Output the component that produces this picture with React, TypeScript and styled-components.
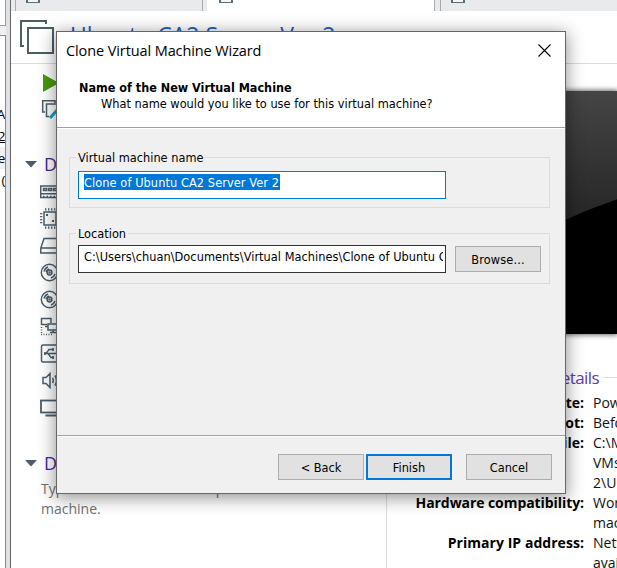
import React from "react";
import styled, { createGlobalStyle } from "styled-components";

const GlobalStyle = createGlobalStyle`
  * { box-sizing: border-box; }
  body { margin: 0; background: #fff; overflow: hidden; }
`;

const UI = `"Open Sans", "Noto Sans", sans-serif`;
const DLG = `"DejaVu Sans Condensed", "DejaVu Sans", sans-serif`;

const Window = styled.div`
  position: relative;
  display: flex;
  width: 617px;
  height: 568px;
  overflow: hidden;
  background: #fff;
  font-family: ${UI};
  color: #111;
`;

const Text = styled.span<{ $ls?: number }>`
  display: block;
  white-space: pre;
  letter-spacing: ${(p) => p.$ls ?? 0}px;
`;

/* library strip */
const Library = styled.aside`
  width: 6px;
  flex: none;
  display: flex;
  flex-direction: column;
  gap: 9px;
  background: #f0f0f0;
`;
const SearchEdge = styled.div`
  height: 26px;
  background: #fff;
  border-right: 1px solid #999;
  border-bottom: 1px solid #999;
`;
const Tree = styled.div`
  flex: 1;
  padding-top: 67px;
  background: #fff;
  border-top: 1px solid #828790;
  border-right: 1px solid #828790;
`;
const TreeRow = styled.div<{ $on?: boolean }>`
  display: flex;
  justify-content: flex-end;
  height: 22px;
  overflow: hidden;
  font-size: 13.5px;
  line-height: 23px;
  letter-spacing: -0.4px;
  color: #000;
  background: ${(p) => (p.$on ? "#f0f0f0" : "#fff")};
`;
const Splitter = styled.div`
  width: 5px;
  flex: none;
  background: #e0e1e5;
  border-right: 1px solid #656565;
`;

/* main area */
const Main = styled.main`
  flex: 1;
  min-width: 0;
  display: flex;
  flex-direction: column;
`;
const TabBar = styled.div`
  display: flex;
  height: 11px;
  flex: none;
  background: #e9eaec;
  overflow: hidden;
`;
const Tab = styled.div<{ $w: number; $pad: number; $active?: boolean; $line?: boolean }>`
  width: ${(p) => p.$w}px;
  flex: none;
  height: 11px;
  padding-left: ${(p) => p.$pad}px;
  background: ${(p) => (p.$active ? "#fff" : "#e9eaec")};
  border-right: 1px solid ${(p) => (p.$line ? "#a9abae" : "transparent")};
`;
const TabIcon = styled.div`
  width: 14px;
  height: 3px;
  background: #f4f5f6;
  border: 2px solid #5d6d78;
  border-top: 0;
  border-bottom-width: 1px;
`;
const Header = styled.header`
  display: flex;
  height: 53px;
  flex: none;
  padding: 8px 0 0 8px;
  gap: 16px;
  border-bottom: 1px solid #dcdcdc;
`;
const VmTitle = styled.h1`
  margin: 3px 0 0;
  font-size: 23px;
  line-height: 27px;
  font-weight: 400;
  color: #1761c2;
`;
const Columns = styled.div`
  flex: 1;
  min-height: 0;
  display: flex;
`;
const LeftColumn = styled.div`
  width: 376px;
  flex: none;
  padding: 10px 0 0 14px;
  border-right: 1px solid #dcdcdc;
`;
const Actions = styled.div`
  display: flex;
  flex-direction: column;
  gap: 7px;
  height: 78px;
  padding-left: 16px;
`;
const SectionHead = styled.div`
  display: flex;
  align-items: center;
  gap: 7px;
  height: 24px;
  font-size: 18px;
  line-height: 24px;
  color: #432a9b;
`;
const Devices = styled.div`
  display: flex;
  flex-direction: column;
  height: 275px;
  padding: 2px 0 0 15px;
`;
const Device = styled.div`
  height: 27px;
  display: flex;
  align-items: center;
`;
const Description = styled.div`
  padding: 4px 0 0 16px;
  font-size: 14px;
  line-height: 20px;
  color: #707070;
`;
const RightColumn = styled.div`
  flex: 1;
  min-width: 0;
  display: flex;
  flex-direction: column;
  padding-top: 27px;
`;
const Preview = styled.div`
  height: 243px;
  flex: none;
  margin-left: 100px;
  overflow: hidden;
  box-shadow: 0 0 5px 1px rgba(0, 0, 0, 0.6);
  svg { display: block; }
`;
const DetailsHead = styled.div`
  display: flex;
  flex: none;
  align-items: center;
  gap: 4px;
  height: 24px;
  margin: 31px 0 4px;
  font-size: 17px;
  color: #5a3fa6;
  &::after { content: ""; flex: 1; height: 1px; background: #dcdcdc; }
`;
const DetailsName = styled.div`
  width: 212px;
  display: flex;
  justify-content: flex-end;
`;
const DetailRow = styled.div`
  display: grid;
  flex: none;
  grid-template-columns: 197px 120px;
  grid-template-rows: 20px;
  column-gap: 9px;
  font-size: 14px;
  line-height: 20px;
`;
const DetailLabel = styled.div`
  display: flex;
  justify-content: flex-end;
  font-weight: 700;
  color: #000;
`;

/* dialog */
const Dialog = styled.section`
  position: absolute;
  left: 56px;
  top: 31px;
  width: 510px;
  height: 463px;
  display: flex;
  flex-direction: column;
  background: #f0f0f0;
  border: 1px solid #666;
  box-shadow: 0 3px 16px 1px rgba(0, 0, 0, 0.42);
  font-family: ${DLG};
  font-size: 12.65px;
  color: #000;
`;
const DialogTop = styled.div`
  height: 96px;
  flex: none;
  background: #fff;
  border-bottom: 1px solid #a0a0a0;
`;
const TitleBar = styled.div`
  display: flex;
  justify-content: space-between;
  align-items: center;
  height: 36px;
  padding: 0 14px 0 9px;
  font-family: ${UI};
  font-size: 14.5px;
`;
const Heading = styled.div`
  padding-left: 22px;
  margin-top: 12px;
  line-height: 16px;
  font-weight: 700;
  font-size: 12.5px;
`;
const Question = styled.div`
  padding-left: 44px;
  line-height: 16px;
`;
const Body = styled.div`
  flex: 1;
  display: flex;
  flex-direction: column;
  gap: 25px;
  padding: 28px 15px 0 12px;
  border-top: 1px solid #fff;
`;
const Group = styled.div`
  height: 51px;
  border: 1px solid #dcdcdc;
  padding-left: 8px;
`;
const Legend = styled.div`
  width: max-content;
  height: 16px;
  margin: -8px 0 0 -2px;
  padding: 0 2px;
  line-height: 16px;
  background: #f0f0f0;
`;
const FieldRow = styled.div<{ $top: number }>`
  display: flex;
  align-items: center;
  gap: 9px;
  margin-top: ${(p) => p.$top}px;
`;
const Field = styled.div<{ $focus?: boolean }>`
  width: 368px;
  height: 28px;
  padding: 2px 2px 0 5px;
  background: #fff;
  border: 1px solid ${(p) => (p.$focus ? "#0078d7" : "#333")};
`;
const FieldText = styled.div<{ $on?: boolean }>`
  width: ${(p) => (p.$on ? "196px" : "auto")};
  height: 16px;
  line-height: 17px;
  overflow: hidden;
  color: ${(p) => (p.$on ? "#fff" : "#000")};
  background: ${(p) => (p.$on ? "#0078d7" : "transparent")};
`;
const Button = styled.button<{ $primary?: boolean }>`
  width: 86px;
  height: 26px;
  flex: none;
  padding: 0;
  display: flex;
  align-items: center;
  justify-content: center;
  border: ${(p) => (p.$primary ? "2px solid #0078d7" : "1px solid #adadad")};
  background: #e1e1e1;
  color: #000;
  font: inherit;
`;
const Footer = styled.div`
  height: 58px;
  flex: none;
  display: flex;
  justify-content: flex-end;
  padding: 18px 13px 0 0;
  border-top: 1px solid #a0a0a0;
  box-shadow: inset 0 1px #fff;
`;
const Pair = styled.div`
  display: flex;
  gap: 2px;
  margin-right: 14px;
`;

const C = "#4c5d69";

const Line = ({ w, h, children }: { w: number; h: number; children: React.ReactNode }) => (
  <svg width={w} height={h} viewBox={`0 0 ${w} ${h}`} fill="none" stroke={C} strokeWidth="1.5">
    {children}
  </svg>
);

const Caret = () => (
  <svg width="12" height="24" viewBox="0 0 12 24">
    <path d="M0 9H12L6 15.5Z" fill={C} />
  </svg>
);

const MachineIcon = () => (
  <svg width="35" height="36" viewBox="0 0 35 36" fill="none" stroke={C} strokeWidth="2">
    <path d="M27 5V2H2V27H5" />
    <rect x="9" y="9" width="25" height="25" />
  </svg>
);

const Disc = () => (
  <Line w={20} h={19}>
    <circle cx="9.5" cy="9.5" r="8.2" />
    <circle cx="9.5" cy="9.5" r="2.4" />
    <path d="M4 8.5Q5 5 8 4M11 15Q14 14 15 11M6 9Q7 6.5 9 6" />
    <circle cx="9.5" cy="9.5" r=".5" />
  </Line>
);

const devices: [string, React.ReactNode][] = [
  ["memory", <Line w={24} h={14}>
    <path d="M.7 1H23V12.6H.7ZM.7 8.8H23" />
    <path d="M3.5 3.5h3v2h-3zM8.5 3.5h3v2h-3zM13.5 3.5h3v2h-3z" />
    <path d="M3 11.5h18" strokeDasharray="1.5 2" />
  </Line>],
  ["cpu", <Line w={20} h={21}>
    <rect x="4" y="4" width="12" height="13" />
    <path d="M5 1.3h12M5 19.7h12" strokeWidth="2.2" strokeDasharray="1.3 1.7" />
    <path d="M1.2 5v12M18.8 5v12" strokeWidth="2.2" strokeDasharray="1.3 1.7" />
    <path d="M6 7h2M12 13h2" strokeWidth="2" />
  </Line>],
  ["disk", <Line w={24} h={18}>
    <path d="M4 1.5H20L23 11V16H.8V11ZM.8 11H23" />
  </Line>],
  ["cd", <Disc />],
  ["cd2", <Disc />],
  ["net", <Line w={20} h={19}>
    <path d="M7 7.5H1.5V1.5H11V6" />
    <rect x="8" y="7" width="11" height="6" />
    <path d="M5 9.5H8M13 13v2M10 15.5h6" />
    <path d="M1.5 10v7M1 17.5h12" strokeDasharray="1 1.5" />
  </Line>],
  ["usb", <Line w={22} h={19}>
    <rect x="1.5" y="1" width="20" height="17" rx="1.5" />
    <path d="M4 9.5H18M6 9.5L9 5.5H13M8 9.5L11 13.5H14" strokeWidth="1.3" />
    <path d="M4 9.5h2M12 5.5h2M12 13.5h2" strokeWidth="2.4" />
  </Line>],
  ["sound", <Line w={20} h={17}>
    <path d="M3 5.5H6L10 1.5V15.5L6 11.5H3ZM12.5 6Q14 8.5 12.5 11M15 3.5Q18 8.5 15 13.5" />
  </Line>],
  ["display", <Line w={24} h={18}>
    <rect x="1" y="1.5" width="22" height="12" strokeWidth="1.8" />
    <path d="M5.5 16.5h12" strokeWidth="2" />
  </Line>],
];

const rows: [string, number, string][] = [
  ["State:", 0, "Powered off"],
  ["Snapshot:", 0, "Before"],
  ["Configuration file:", 0, "C:\\MyVM"],
  ["", 0, "VMs\\Ub"],
  ["", 0, "2\\Ubuntu"],
  ["Hardware compatibility:", -0.07, "Workstation"],
  ["", 0, "machine"],
  ["Primary IP address:", 0.05, "Network"],
  ["", 0, "available"],
];

export default function App() {
  return (
    <>
      <GlobalStyle />
      <Window>
        <Library>
          <SearchEdge />
          <Tree>
            <TreeRow>A</TreeRow>
            <TreeRow><u>2</u></TreeRow>
            <TreeRow $on>re</TreeRow>
            <TreeRow>(</TreeRow>
          </Tree>
        </Library>
        <Splitter />
        <Main>
          <TabBar>
            <Tab $w={5} $pad={0} $line />
            <Tab $w={187} $pad={10} $line><TabIcon /></Tab>
            <Tab $w={4} $pad={0} />
            <Tab $w={228} $pad={12} $active $line><TabIcon /></Tab>
            <Tab $w={6} $pad={0} $line />
            <Tab $w={190} $pad={10}><TabIcon /></Tab>
          </TabBar>
          <Header>
            <MachineIcon />
            <VmTitle><Text>Ubuntu CA2 Server Ver 2</Text></VmTitle>
          </Header>
          <Columns>
            <LeftColumn>
              <Actions>
                <svg width="18" height="18" viewBox="0 0 18 18"><path d="M2 0L18 9L2 18Z" fill="#479a0c" /></svg>
                <Line w={20} h={20}>
                  <path d="M4 13H1.7V1.7H14V4" />
                  <path d="M18 5H5.5V17.5H8" />
                  <path d="M9 19L18 9" stroke="#0fa3c4" strokeWidth="3" />
                </Line>
              </Actions>
              <SectionHead><Caret />Devices</SectionHead>
              <Devices>
                {devices.map(([name, icon]) => <Device key={name}>{icon}</Device>)}
              </Devices>
              <SectionHead><Caret />Description</SectionHead>
              <Description>
                <Text>Type here to enter a description of this virtual</Text>
                <Text>machine.</Text>
              </Description>
            </LeftColumn>
            <RightColumn>
              <Preview>
                <svg width="131" height="243" viewBox="0 0 131 243">
                  <defs>
                    <linearGradient id="sheen" x1="0" y1="0" x2="0" y2="1">
                      <stop offset="0" stopColor="#454545" />
                      <stop offset="1" stopColor="#1c1c1c" />
                    </linearGradient>
                  </defs>
                  <rect width="131" height="243" fill="#000" />
                  <path d="M0 0H131V108L120 112Q94 121 68 134L0 170Z" fill="url(#sheen)" />
                </svg>
              </Preview>
              <DetailsHead><DetailsName><Text $ls={-0.6}>Virtual Machine Details</Text></DetailsName></DetailsHead>
              {rows.map(([label, ls, value]) => (
                <DetailRow key={value}>
                  <DetailLabel><Text $ls={ls}>{label}</Text></DetailLabel>
                  <Text>{value}</Text>
                </DetailRow>
              ))}
            </RightColumn>
          </Columns>
        </Main>
        <Dialog>
          <DialogTop>
            <TitleBar>
              <Text $ls={-0.1}>Clone Virtual Machine Wizard</Text>
              <svg width="13" height="13" viewBox="0 0 13 13" stroke="#000" strokeWidth="1.1"><path d="M.5 .5L12.500 12.500M12.500 .5L.5 12.500" /></svg>
            </TitleBar>
            <Heading><Text>Name of the New Virtual Machine</Text></Heading>
            <Question><Text>What name would you like to use for this virtual machine?</Text></Question>
          </DialogTop>
          <Body>
            <Group>
              <Legend><Text>Virtual machine name</Text></Legend>
              <FieldRow $top={5}>
                <Field $focus><FieldText $on><Text $ls={0.08}>Clone of Ubuntu CA2 Server Ver 2</Text></FieldText></Field>
              </FieldRow>
            </Group>
            <Group>
              <Legend><Text>Location</Text></Legend>
              <FieldRow $top={3}>
                <Field><FieldText><Text $ls={0.04}>C:\Users\chuan\Documents\Virtual Machines\Clone of Ubuntu CA2 Server Ver 2</Text></FieldText></Field>
                <Button><Text $ls={0.15}>Browse...</Text></Button>
              </FieldRow>
            </Group>
          </Body>
          <Footer>
            <Pair>
              <Button><Text>&lt; Back</Text></Button>
              <Button $primary><Text>Finish</Text></Button>
            </Pair>
            <Button><Text>Cancel</Text></Button>
          </Footer>
        </Dialog>
      </Window>
    </>
  );
}
